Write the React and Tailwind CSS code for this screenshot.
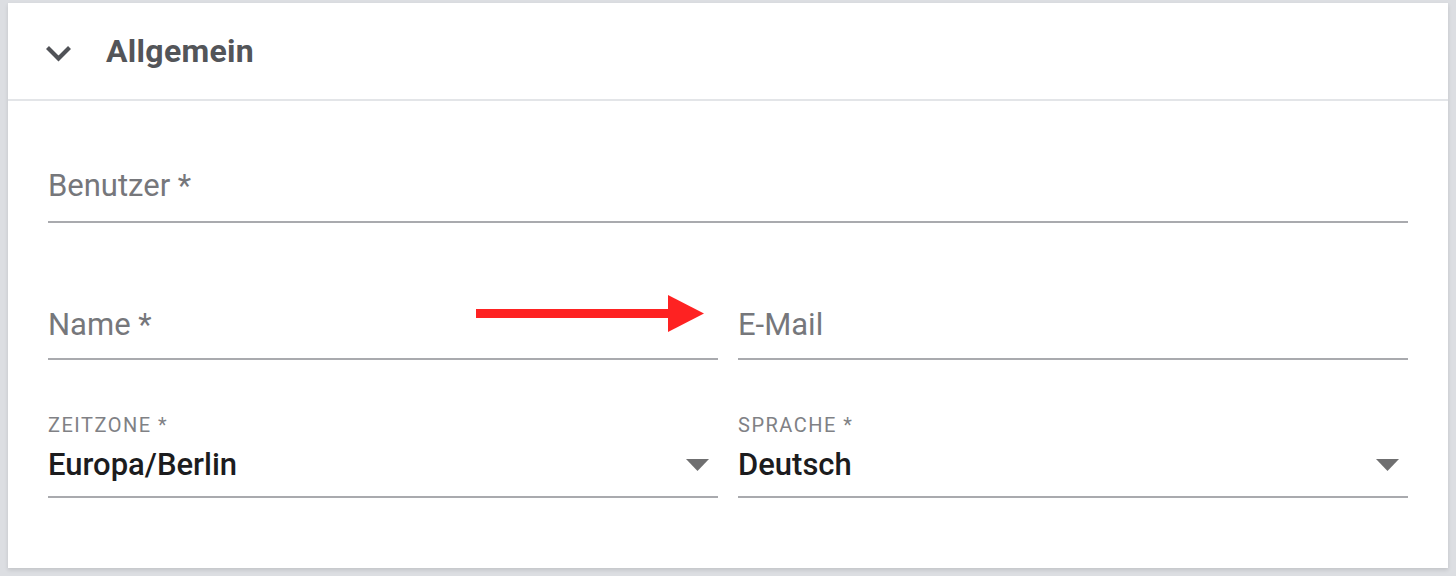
import React from "react";

const font = { fontFamily: "Roboto, 'Liberation Sans', sans-serif" };

function Caret() {
  return (
    <svg width="23" height="12" viewBox="0 0 23 12" className="shrink-0">
      <polygon points="0,0 23,0 11.5,12" fill="#6f6f70" />
    </svg>
  );
}

function TextField({ label, pb }) {
  return (
    <div className={`border-b-2 border-[#a9aaae] ${pb}`}>
      <div className="text-[31px] leading-[34px] text-[#76777b]">{label}</div>
    </div>
  );
}

function SelectField({ label, value }) {
  return (
    <div className="flex flex-col">
      <div className="text-[20px] leading-[24px] tracking-[1.5px] text-[#808185]">{label}</div>
      <div className="mt-[11px] flex items-center justify-between border-b-2 border-[#a9aaae] pb-[14px] pr-[9px]">
        <div className="text-[31px] leading-[34px] font-medium text-[#1c1c1e]">{value}</div>
        <Caret />
      </div>
    </div>
  );
}

export default function App() {
  return (
    <div style={font} className="w-[1456px] h-[576px] overflow-hidden bg-[#dcdee2] pt-[3px] pl-[8px]">
      <div className="relative w-[1440px] h-[565px] bg-white shadow-[0_2px_4px_rgba(0,0,0,0.12)]">
        <div className="h-[98px] flex items-center border-b-2 border-[#e3e5e8]">
          <svg width="29" height="19" viewBox="0 0 29 19" className="ml-[36px] mt-[4px]">
            <path d="M3.5 3.5 L14.5 14.5 L25.5 3.5" fill="none" stroke="#505257" strokeWidth="4.2" strokeLinecap="butt" strokeLinejoin="miter" />
          </svg>
          <div className="ml-[33px] text-[32px] leading-[36px] font-bold text-[#535559] tracking-[0.3px]">Allgemein</div>
        </div>
        <div className="px-[40px] pt-[68px]">
          <TextField label="Benutzer *" pb="pb-[18px]" />
          <div className="grid grid-cols-2 gap-x-[20px] mt-[85px]">
            <TextField label="Name *" pb="pb-[16px]" />
            <TextField label="E-Mail" pb="pb-[16px]" />
          </div>
          <div className="grid grid-cols-2 gap-x-[20px] mt-[53px]">
            <SelectField label="ZEITZONE *" value="Europa/Berlin" />
            <SelectField label="SPRACHE *" value="Deutsch" />
          </div>
        </div>
        <svg
          width="228"
          height="38"
          viewBox="0 0 228 38"
          className="absolute left-[468px] top-[292px]"
        >
          <rect x="0" y="14" width="196" height="9" fill="#fe2222" />
          <polygon points="192,0 228,18.5 192,37" fill="#fe2222" />
        </svg>
      </div>
    </div>
  );
}
